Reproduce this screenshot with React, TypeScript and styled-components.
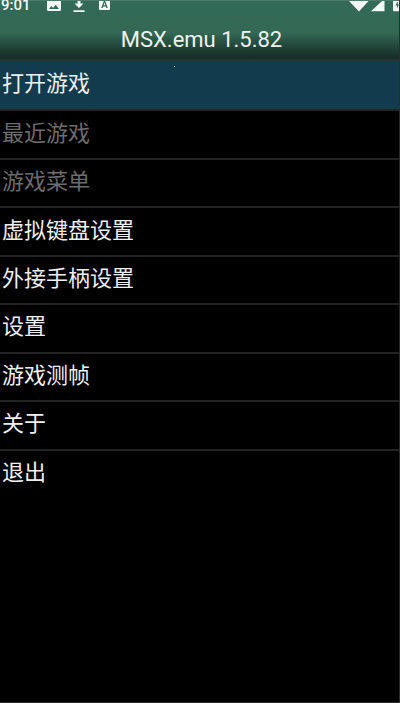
import React, { useState } from "react";
import styled, { createGlobalStyle } from "styled-components";

const GlobalStyle = createGlobalStyle`
  * { box-sizing: border-box; }
  body { margin: 0; background: #000; }
`;

const Screen = styled.div`
  position: relative;
  display: flex;
  flex-direction: column;
  min-height: 100vh;
  overflow: hidden;
  background: #000;
  border-right: 1px solid #2c2c2c;
  border-bottom: 1px solid #2c2c2c;
  font-family: Roboto, "Noto Sans CJK SC", sans-serif;
`;

const Header = styled.header`
  display: flex;
  flex-direction: column;
  height: 61px;
  border-top: 1px solid #4c7d6b;
  border-bottom: 2px solid #293331;
  background: linear-gradient(#336b58 0, #336854 32px, #24493c 44px, #142c24 58px);
`;

const StatusBar = styled.div`
  display: flex;
  justify-content: space-between;
  height: 13px;
  padding-left: 1px;
  color: #f4f8f6;
`;

const StatusGroup = styled.div`
  display: flex;
  align-items: flex-start;
`;

const Clock = styled.time`
  width: 46px;
  font-size: 15px;
  font-weight: 500;
  line-height: 8px;
`;

const StatusIcon = styled.svg<{ $gap: number }>`
  display: block;
  flex: none;
  height: 12px;
  margin-right: ${(p) => p.$gap}px;
  fill: currentColor;
`;

const Title = styled.h1`
  margin: 0;
  padding: 12px 0 0 4px;
  color: #eef3f1;
  font-size: 22px;
  font-weight: 400;
  line-height: 28px;
  text-align: center;
`;

const Menu = styled.ul`
  display: grid;
  grid-auto-rows: 1fr;
  min-height: 436px;
  margin: 0;
  padding: 0;
  list-style: none;
`;

const MenuRow = styled.li`
  display: flex;
  & + & { border-top: 2px solid #222324; }
`;

const MenuButton = styled.button<{ $active: boolean }>`
  flex: 1;
  padding: 0 2px 2px;
  border: 0;
  outline: 0;
  background: ${(p) => (p.$active ? "#123c4e" : "transparent")};
  color: #efefef;
  font: 400 22px/32px Roboto, "Noto Sans CJK SC", sans-serif;
  text-align: left;
  &:disabled { color: #6c6c6c; }
`;

const Speck = styled.span`
  position: absolute;
  top: 66px;
  left: 174px;
  width: 1px;
  height: 1px;
  background: #dfe8ec;
`;

const items = [
  { label: "打开游戏", disabled: false },
  { label: "最近游戏", disabled: true },
  { label: "游戏菜单", disabled: true },
  { label: "虚拟键盘设置", disabled: false },
  { label: "外接手柄设置", disabled: false },
  { label: "设置", disabled: false },
  { label: "游戏测帧", disabled: false },
  { label: "关于", disabled: false },
  { label: "退出", disabled: false },
];

export default function App() {
  const [active, setActive] = useState(0);
  return (
    <Screen>
      <GlobalStyle />
      <Header>
        <StatusBar>
          <StatusGroup>
            <Clock>9:01</Clock>
            <StatusIcon $gap={12} width="14" viewBox="0 0 14 12" aria-hidden="true">
              <path fillRule="evenodd" d="M0 0H14V8.5Q14 10 12.5 10H1.5Q0 10 0 8.5ZM2 8H12L8.7 3.7L6.1 7L4.3 4.9Z" />
            </StatusIcon>
            <StatusIcon $gap={14} width="12" viewBox="0 0 12 12" aria-hidden="true">
              <path d="M4.5 0H7.5V2.5H10.5L6 7L1.5 2.5H4.5ZM0.5 9.2H11.5V11H0.5Z" />
            </StatusIcon>
            <StatusIcon $gap={0} width="11" viewBox="0 0 11 12" aria-hidden="true">
              <path fillRule="evenodd" d="M0 0H11V8Q11 9 10 9H1Q0 9 0 8ZM4.8 0L2.2 7H3.7L4.2 5.5H6.8L7.3 7H8.8L6.2 0ZM5.5 1.6L6.4 4.3H4.6Z" />
            </StatusIcon>
          </StatusGroup>
          <StatusGroup>
            <StatusIcon $gap={2} width="20" viewBox="0 0 20 12" aria-hidden="true">
              <path d="M0 0H19.5L10 10.5Z" />
            </StatusIcon>
            <StatusIcon $gap={8} width="14" viewBox="0 0 14 12" aria-hidden="true">
              <path d="M11 0H13.5V10.2H0Z" />
            </StatusIcon>
            <StatusIcon $gap={0} width="6" viewBox="0 0 6 12" aria-hidden="true">
              <path fillRule="evenodd" d="M0 0H6V10.2H1Q0 10.2 0 9ZM4 1L2.6 4.4H4V7.5L6 3.6H4.8V1Z" />
            </StatusIcon>
          </StatusGroup>
        </StatusBar>
        <Title>MSX.emu 1.5.82</Title>
      </Header>
      <Menu>
        {items.map((item, i) => (
          <MenuRow key={item.label}>
            <MenuButton
              type="button"
              disabled={item.disabled}
              $active={i === active}
              onClick={() => setActive(i)}
            >
              {item.label}
            </MenuButton>
          </MenuRow>
        ))}
      </Menu>
      <Speck />
    </Screen>
  );
}
